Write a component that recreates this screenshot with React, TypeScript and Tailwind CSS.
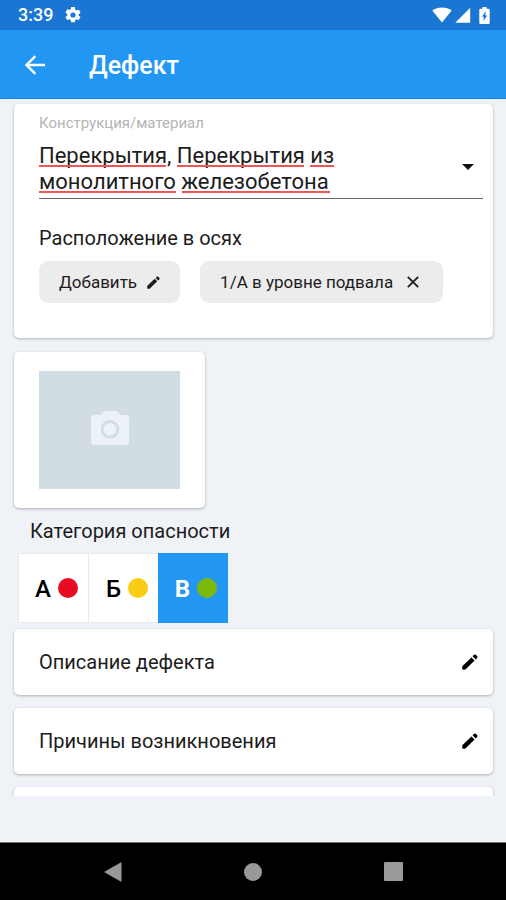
import { useState } from "react";
import type { ReactNode } from "react";

const misspelled = [
  ["w-[127px] mr-[11px]", "w-[127px] mr-[6px]", "w-[24px]"],
  ["w-[137px] mr-[6px]", "w-[148px]"],
];

const categories = [
  { id: "А", dot: "bg-[#e80c22]" },
  { id: "Б", dot: "bg-[#fbcc14]" },
  { id: "В", dot: "bg-[#7cb90b]" },
];

function Pencil({ className }: { className: string }) {
  return (
    <svg viewBox="0 0 18 18" className={className} fill="currentColor" aria-hidden="true">
      <path d="M0.6 13.4 L10.6 3.8 L14.2 7.4 L4.4 17 Q3.6 17.7 2.6 17.7 L1.5 17.7 Q0.3 17.7 0.3 16.5 L0.3 14.4 Q0.3 13.8 0.6 13.4 Z" />
      <path d="M11.9 2.6 L13.6 0.9 Q14.6 0.1 15.5 0.9 L17.1 2.5 Q17.9 3.4 17.1 4.4 L15.4 6.1 Z" />
    </svg>
  );
}

function Card({ className = "", children }: { className?: string; children?: ReactNode }) {
  return (
    <section className={`rounded-[5px] bg-white shadow-[0_1px_3px_rgba(0,0,0,0.28)] ${className}`}>
      {children}
    </section>
  );
}

function EditRow({ title }: { title: string }) {
  return (
    <Card className="flex h-[66px] shrink-0 items-center justify-between pr-[15px] pl-[25px]">
      <h2 className="text-[20px] leading-6">{title}</h2>
      <button type="button" aria-label={title} className="text-black">
        <Pencil className="size-4" />
      </button>
    </Card>
  );
}

export default function App() {
  const [category, setCategory] = useState("В");
  const [material, setMaterial] = useState("Перекрытия, Перекрытия из монолитного железобетона");

  return (
    <div className="flex h-screen flex-col bg-[#eff3f8] font-['Roboto','Noto_Sans',sans-serif] text-[#1c1c1c]">
      <div className="flex h-[30px] shrink-0 items-center justify-between bg-[#1976d2] pr-4 pl-[18px] text-white">
        <div className="flex items-center gap-[12px]">
          <span className="text-[18px] leading-6 font-medium">3:39</span>
          <svg viewBox="2 2 20 20" className="size-4" fill="currentColor" aria-hidden="true">
            <path d="M19.14 12.94c.04-.3.06-.61.06-.94 0-.32-.02-.64-.07-.94l2.03-1.58a.49.49 0 0 0 .12-.61l-1.92-3.32a.49.49 0 0 0-.59-.22l-2.39.96a7.03 7.03 0 0 0-1.62-.94l-.36-2.54A.48.48 0 0 0 13.92 2h-3.84a.48.48 0 0 0-.48.41l-.36 2.54c-.59.24-1.13.57-1.62.94l-2.39-.96a.49.49 0 0 0-.59.22L2.72 8.47a.48.48 0 0 0 .12.61l2.03 1.58c-.05.3-.07.62-.07.94s.02.64.07.94l-2.03 1.58a.49.49 0 0 0-.12.61l1.92 3.32c.12.22.37.29.59.22l2.39-.96c.5.38 1.03.7 1.62.94l.36 2.54c.05.24.24.41.48.41h3.84c.24 0 .44-.17.47-.41l.36-2.54c.59-.24 1.13-.56 1.62-.94l2.39.96c.22.08.47 0 .59-.22l1.92-3.32a.48.48 0 0 0-.12-.61zM12 15.2a3.2 3.2 0 1 1 0-6.4 3.2 3.2 0 0 1 0 6.4z" />
          </svg>
        </div>
        <div className="flex items-center" aria-hidden="true">
          <svg viewBox="0 0 20 16" className="mr-[3px] h-4 w-5" fill="currentColor">
            <path d="M10 15.5 L0.3 3.6 C5.5 -0.7 14.5 -0.7 19.7 3.6 Z" />
          </svg>
          <svg viewBox="0 0 16 16" className="mr-2 size-4" fill="currentColor">
            <path d="M0.3 15.7 L15.2 0.8 V15.7 Z" />
          </svg>
          <svg viewBox="0 0 11 17" className="h-[17px] w-[11px]">
            <path d="M3.4 0 H7.6 V1.8 H9.6 Q10.7 1.8 10.7 3 V15.8 Q10.7 17 9.6 17 H1.4 Q0.3 17 0.3 15.8 V3 Q0.3 1.8 1.4 1.8 H3.4 Z" fill="#fff" />
            <path d="M6.8 4 L3 9.8 H5 L4.4 14 L8.2 8.4 H6.2 Z" fill="#1976d2" />
          </svg>
        </div>
      </div>

      <header className="flex h-[69px] shrink-0 items-center gap-[44px] border-b border-[#1583e0] bg-[#2196f3] pt-[2px] pl-[25px] text-white">
        <button type="button" aria-label="Назад">
          <svg viewBox="0 0 20 20" className="size-5" fill="none" stroke="currentColor" strokeWidth="2.4" aria-hidden="true">
            <path d="M20 10 H2 M10.3 1.1 L1.5 10 L10.3 18.9" />
          </svg>
        </button>
        <h1 className="pt-[2px] text-[25px] leading-8 font-medium">Дефект</h1>
      </header>

      <main className="mb-[46px] flex min-h-0 flex-1 flex-col overflow-hidden px-[14px] pt-[5px] pr-[13px]">
        <Card className="h-[234px] shrink-0 px-[25px] pt-[9px] pr-[10px]">
          <label htmlFor="material" className="block text-[15px] leading-5 text-[#b4b4b4]">
            Конструкция/материал
          </label>
          <div className="relative mt-[10px] flex h-[56px] border-b border-[#666]">
            <textarea
              id="material"
              rows={2}
              spellCheck={false}
              value={material}
              onChange={(e) => setMaterial(e.target.value)}
              className="h-[52px] w-[320px] resize-none overflow-hidden bg-transparent text-[22px] leading-[26px] outline-none"
            />
            <button type="button" aria-label="Открыть список" className="mr-[9px] mb-2 ml-auto">
              <svg viewBox="0 0 12 6" className="h-[6px] w-3" fill="#111" aria-hidden="true">
                <path d="M0 0 H12 L6 6 Z" />
              </svg>
            </button>
            <div className="pointer-events-none absolute top-0 left-0" aria-hidden="true">
              {misspelled.map((line, i) => (
                <div key={i} className="flex h-[26px] items-end pb-[2px]">
                  {line.map((mark, j) => (
                    <span key={j} className={`h-[2px] bg-[#f25555] ${mark}`} />
                  ))}
                </div>
              ))}
            </div>
          </div>

          <h2 className="mt-[27px] text-[20px] leading-6">Расположение в осях</h2>
          <div className="mt-[11px] flex gap-5 text-[17px] leading-6">
            <button type="button" className="flex h-[42px] items-center gap-[10px] rounded-[9px] bg-[#ececec] px-5">
              Добавить
              <Pencil className="size-[13px]" />
            </button>
            <button type="button" className="flex h-[42px] items-center gap-[14px] rounded-[9px] bg-[#ececec] pr-6 pl-5">
              1/А в уровне подвала
              <svg viewBox="0 0 12 12" className="size-3" fill="none" stroke="currentColor" strokeWidth="1.8" aria-hidden="true">
                <path d="M0.8 0.8 L11.2 11.2 M11.2 0.8 L0.8 11.2" />
              </svg>
            </button>
          </div>
        </Card>

        <Card className="mt-[14px] h-[156px] w-[191px] shrink-0 px-[25px] pt-[19px]">
          <button type="button" aria-label="Добавить фото" className="flex h-[118px] w-full items-center justify-center bg-[#d2dce3]">
            <svg viewBox="0 0 38 34" className="mb-1 h-[34px] w-[38px]" fill="#edf1f8" aria-hidden="true">
              <path fillRule="evenodd" d="M13 0 H25.5 L29 4 H34.5 Q38 4 38 7.5 V30.5 Q38 34 34.5 34 H3.5 Q0 34 0 30.5 V7.5 Q0 4 3.5 4 H9.5 Z M19 9 A9.3 9.3 0 1 0 19 27.6 A9.3 9.3 0 1 0 19 9 Z" />
              <circle cx="19" cy="18.3" r="6.4" />
            </svg>
          </button>
        </Card>

        <fieldset className="mt-[11px] shrink-0">
          <legend className="px-4 text-[20px] leading-6">Категория опасности</legend>
          <div className="mt-[10px] ml-1 flex">
            {categories.map((c) => (
              <label
                key={c.id}
                className="flex h-[70px] w-[70px] items-center justify-end gap-[7px] border border-r-0 border-[#e6e9ed] bg-white pt-[2px] pr-[10px] text-[24px] leading-8 font-medium text-black last:border-r has-checked:border-[#2196f3] has-checked:bg-[#2196f3] has-checked:font-bold has-checked:text-white"
              >
                <input
                  type="radio"
                  name="category"
                  value={c.id}
                  checked={category === c.id}
                  onChange={() => setCategory(c.id)}
                  className="sr-only"
                />
                {c.id}
                <span className={`mb-[2px] size-5 rounded-full ${c.dot}`} />
              </label>
            ))}
          </div>
        </fieldset>

        <div className="mt-[6px] flex flex-col gap-[13px]">
          <EditRow title="Описание дефекта" />
          <EditRow title="Причины возникновения" />
          <Card className="h-[66px] shrink-0" />
        </div>
      </main>

      <nav className="flex h-[58px] shrink-0 justify-center border-t border-[#777] bg-black text-[#999]">
        <button type="button" aria-label="Назад" className="flex w-[140px] items-center justify-center">
          <svg viewBox="0 0 18 20" className="h-5 w-[18px]" fill="currentColor" aria-hidden="true">
            <path d="M17.5 0.8 V19.2 Q17.5 20 16.7 19.6 L0.8 10.5 Q0.1 10 0.8 9.5 L16.7 0.4 Q17.5 0 17.5 0.8 Z" />
          </svg>
        </button>
        <button type="button" aria-label="Домой" className="flex w-[140px] items-center justify-center">
          <span className="size-[18px] rounded-full bg-current" />
        </button>
        <button type="button" aria-label="Недавние" className="flex w-[140px] items-center justify-center">
          <span className="size-[19px] rounded-[1px] bg-current" />
        </button>
      </nav>
    </div>
  );
}
